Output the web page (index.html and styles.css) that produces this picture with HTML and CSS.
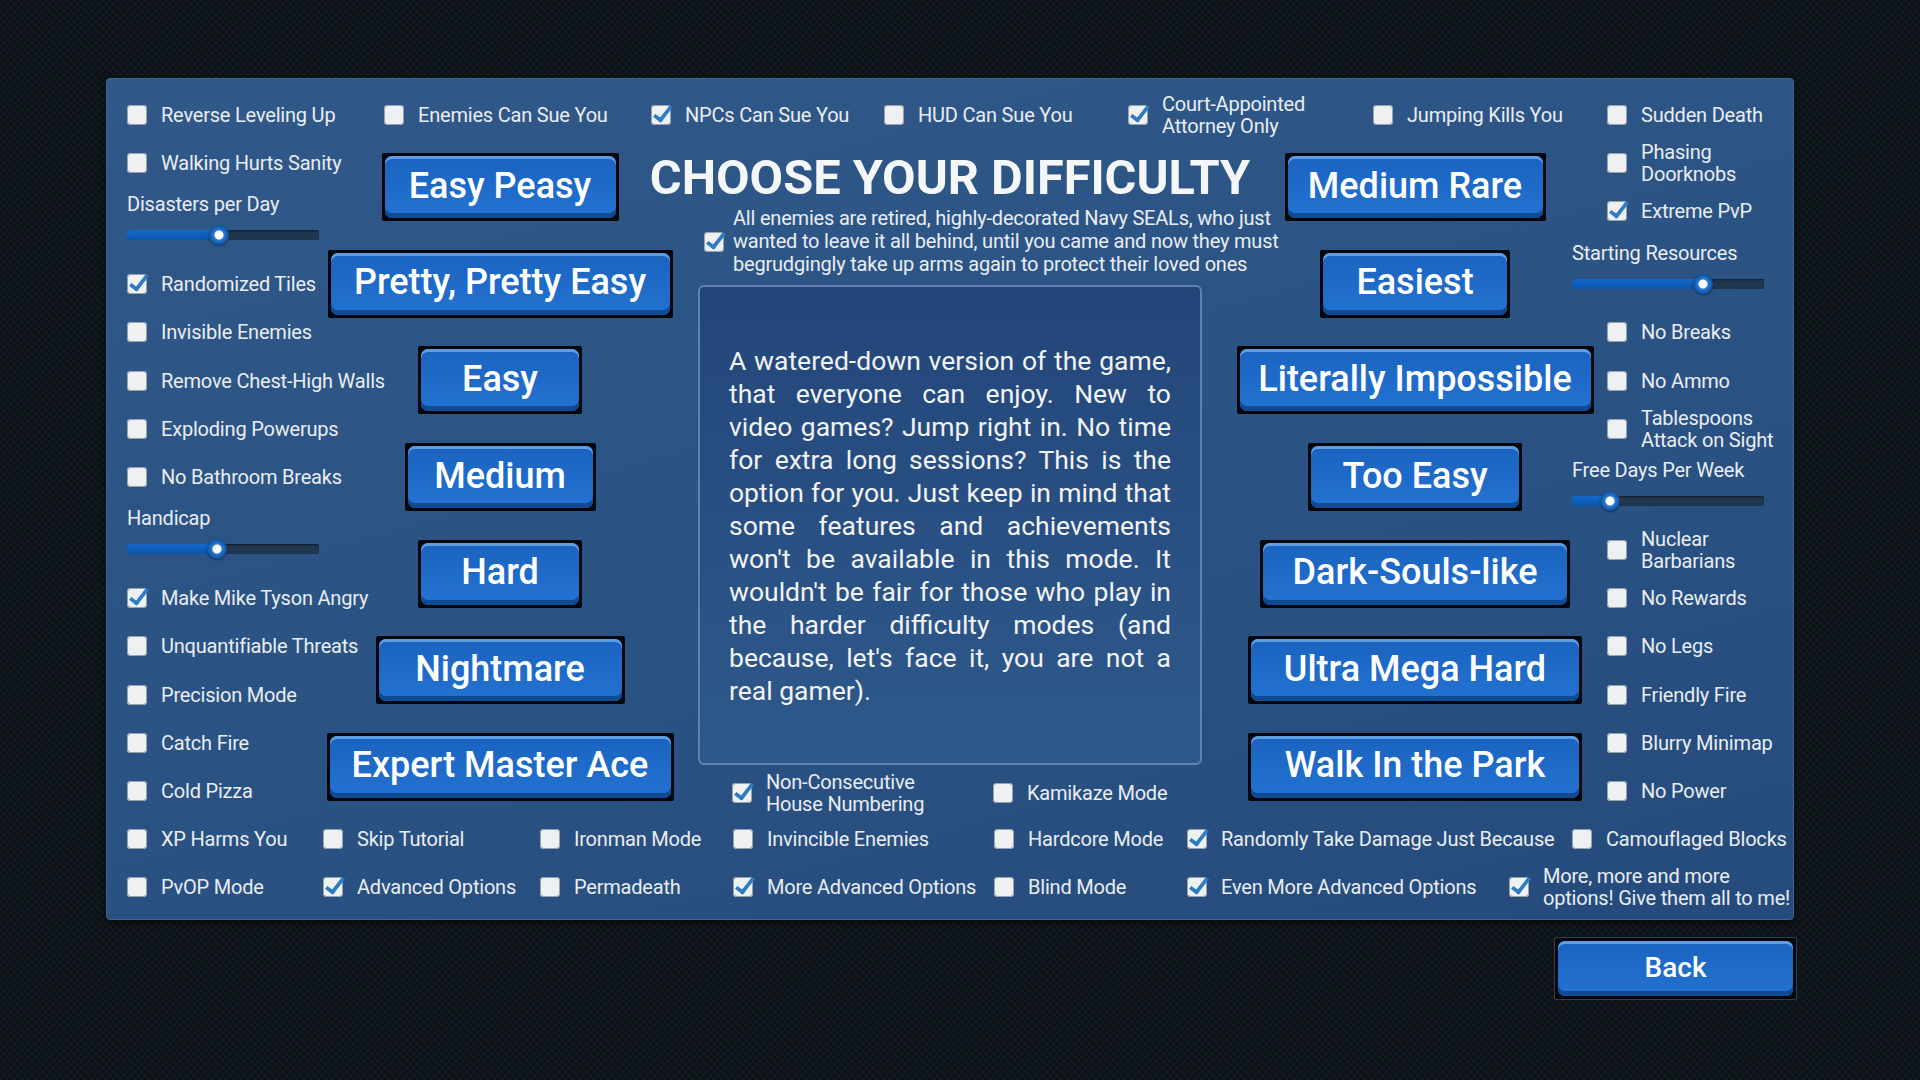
FILE: index.html
```html
<!DOCTYPE html>
<html lang="en">
<head>
    <meta charset="UTF-8">
    <meta name="viewport" content="width=device-width, initial-scale=1.0">
    <title>Choose Your Difficulty</title>
    <link rel="stylesheet" href="styles.css">
</head>
<body>
    <div class="screen">
        <div class="panel">
            <!-- first line of toggles -->
            <div class="grid-row top-row">
                <label class="opt"><span class="box"></span>Reverse Leveling Up</label>
                <label class="opt"><span class="box"></span>Enemies Can Sue You</label>
                <label class="opt"><span class="box on"></span>NPCs Can Sue You</label>
                <label class="opt"><span class="box"></span>HUD Can Sue You</label>
                <label class="opt"><span class="box on"></span>Court-Appointed<br>Attorney Only</label>
                <label class="opt"><span class="box"></span>Jumping Kills You</label>
                <label class="opt"><span class="box"></span>Sudden Death</label>
            </div>

            <div class="middle">
                <div class="side">
                    <label class="opt"><span class="box"></span>Walking Hurts Sanity</label>
                    <div class="slider-block">
                        <div class="slider-label">Disasters per Day</div>
                        <div class="slider"><div class="fill" style="width:48%"></div><span class="knob" style="left:48%"></span></div>
                    </div>
                    <label class="opt"><span class="box on"></span>Randomized Tiles</label>
                    <label class="opt"><span class="box"></span>Invisible Enemies</label>
                    <label class="opt"><span class="box"></span>Remove Chest-High Walls</label>
                    <label class="opt"><span class="box"></span>Exploding Powerups</label>
                    <label class="opt"><span class="box"></span>No Bathroom Breaks</label>
                    <div class="slider-block">
                        <div class="slider-label">Handicap</div>
                        <div class="slider"><div class="fill" style="width:47%"></div><span class="knob" style="left:47%"></span></div>
                    </div>
                    <label class="opt"><span class="box on"></span>Make Mike Tyson Angry</label>
                    <label class="opt"><span class="box"></span>Unquantifiable Threats</label>
                    <label class="opt"><span class="box"></span>Precision Mode</label>
                    <label class="opt"><span class="box"></span>Catch Fire</label>
                    <label class="opt"><span class="box"></span>Cold Pizza</label>
                </div>

                <div class="btn-col">
                    <div class="slot"><button class="diff peasy"><span>Easy Peasy</span></button></div>
                    <div class="slot"><button class="diff pretty"><span>Pretty, Pretty Easy</span></button></div>
                    <div class="slot"><button class="diff easy"><span>Easy</span></button></div>
                    <div class="slot"><button class="diff medium"><span>Medium</span></button></div>
                    <div class="slot"><button class="diff hard"><span>Hard</span></button></div>
                    <div class="slot"><button class="diff nightmare"><span>Nightmare</span></button></div>
                    <div class="slot"><button class="diff expert"><span>Expert Master Ace</span></button></div>
                </div>

                <div class="center">
                    <h1>CHOOSE YOUR DIFFICULTY</h1>
                    <label class="intro"><span class="box on"></span><span>All enemies are retired, highly-decorated Navy SEALs, who just<br>wanted to leave it all behind, until you came and now they must<br>begrudgingly take up arms again to protect their loved ones</span></label>
                    <div class="desc">
                        <p>A watered-down version of the game, that everyone can enjoy. New to video games? Jump right in. No time for extra long sessions? This is the option for you. Just keep in mind that some features and achievements won't be available in this mode. It wouldn't be fair for those who play in the harder difficulty modes (and because, let's face it, you are not a real gamer).</p>
                    </div>
                    <div class="center-opts">
                        <label class="opt"><span class="box on"></span>Non-Consecutive<br>House Numbering</label>
                        <label class="opt"><span class="box"></span>Kamikaze Mode</label>
                    </div>
                </div>

                <div class="btn-col right">
                    <div class="slot"><button class="diff rare"><span>Medium Rare</span></button></div>
                    <div class="slot"><button class="diff easiest"><span>Easiest</span></button></div>
                    <div class="slot"><button class="diff impossible"><span>Literally Impossible</span></button></div>
                    <div class="slot"><button class="diff too-easy"><span>Too Easy</span></button></div>
                    <div class="slot"><button class="diff souls"><span>Dark-Souls-like</span></button></div>
                    <div class="slot"><button class="diff ultra"><span>Ultra Mega Hard</span></button></div>
                    <div class="slot"><button class="diff park"><span>Walk In the Park</span></button></div>
                </div>

                <div class="side side-right">
                    <label class="opt"><span class="box"></span>Phasing<br>Doorknobs</label>
                    <label class="opt"><span class="box on"></span>Extreme PvP</label>
                    <div class="slider-block">
                        <div class="slider-label">Starting Resources</div>
                        <div class="slider"><div class="fill" style="width:68%"></div><span class="knob" style="left:68%"></span></div>
                    </div>
                    <label class="opt"><span class="box"></span>No Breaks</label>
                    <label class="opt"><span class="box"></span>No Ammo</label>
                    <label class="opt"><span class="box"></span>Tablespoons<br>Attack on Sight</label>
                    <div class="slider-block">
                        <div class="slider-label">Free Days Per Week</div>
                        <div class="slider"><div class="fill" style="width:20%"></div><span class="knob" style="left:20%"></span></div>
                    </div>
                    <label class="opt"><span class="box"></span>Nuclear<br>Barbarians</label>
                    <label class="opt"><span class="box"></span>No Rewards</label>
                    <label class="opt"><span class="box"></span>No Legs</label>
                    <label class="opt"><span class="box"></span>Friendly Fire</label>
                    <label class="opt"><span class="box"></span>Blurry Minimap</label>
                    <label class="opt"><span class="box"></span>No Power</label>
                </div>
            </div>

            <!-- last two lines of toggles -->
            <div class="grid-row">
                <label class="opt"><span class="box"></span>XP Harms You</label>
                <label class="opt"><span class="box"></span>Skip Tutorial</label>
                <label class="opt"><span class="box"></span>Ironman Mode</label>
                <label class="opt"><span class="box"></span>Invincible Enemies</label>
                <label class="opt"><span class="box"></span>Hardcore Mode</label>
                <label class="opt"><span class="box on"></span>Randomly Take Damage Just Because</label>
                <label class="opt"><span class="box"></span>Camouflaged Blocks</label>
            </div>
            <div class="grid-row">
                <label class="opt"><span class="box"></span>PvOP Mode</label>
                <label class="opt"><span class="box on"></span>Advanced Options</label>
                <label class="opt"><span class="box"></span>Permadeath</label>
                <label class="opt"><span class="box on"></span>More Advanced Options</label>
                <label class="opt"><span class="box"></span>Blind Mode</label>
                <label class="opt"><span class="box on"></span>Even More Advanced Options</label>
                <label class="opt pull-left"><span class="box on"></span>More, more and more<br>options! Give them all to me!</label>
            </div>
        </div>

        <div class="footer">
            <button class="back"><span>Back</span></button>
        </div>
    </div>
</body>
</html>
```

FILE: styles.css
```css
body {
    margin: 0;
    min-height: 1080px;
    font-family: Roboto, "Noto Sans", sans-serif;
    color: #e9edf1;
    background-color: #0e151b;
    background-image:
        repeating-linear-gradient(45deg, rgba(255,255,255,0.025) 0 2px, transparent 2px 5px),
        repeating-linear-gradient(-45deg, rgba(0,0,0,0.25) 0 2px, transparent 2px 5px);
}
.screen {
    width: 1690px;
    padding: 78px 0 0 106px;
}
.panel {
    box-sizing: border-box;
    width: 1688px;
    padding: 12px 0 8px 20px;
    background: linear-gradient(165deg, #30598a 0%, #2b5485 45%, #254b7c 100%);
    border: 1px solid #3b6595;
    border-radius: 4px;
    box-shadow: 0 2px 6px rgba(0,0,0,0.6);
}

/* checkbox + caption */
.opt {
    display: flex;
    align-items: center;
    gap: 14px;
    height: 48px;
    font-size: 20px;
    line-height: 22px;
    letter-spacing: -0.2px;
    white-space: nowrap;
}
.box {
    position: relative;
    flex: none;
    width: 20px;
    height: 20px;
    border-radius: 4px;
    background: #eef0f2;
    box-shadow: inset 0 0 0 1px #98a2ac;
}
.box.on::after {
    content: '';
    position: absolute;
    left: 7px;
    top: -3px;
    width: 6px;
    height: 16px;
    border: solid #2f7cc4;
    border-width: 0 4px 4px 0;
    border-radius: 0 0 2px 0;
    transform: rotate(38deg);
}

.grid-row {
    display: grid;
    grid-template-columns: 196px 217px 193px 261px 193px 385px 1fr;
}
.top-row {
    grid-template-columns: 257px 267px 233px 244px 245px 234px 1fr;
}
.pull-left {
    margin-left: -63px;
}

.middle {
    display: grid;
    grid-template-columns: 200px 346px 554px 345px 1fr;
    height: 676px;
}
.middle .opt {
    height: 48.3px;
}
.side-right .opt {
    padding-left: 35px;
}

/* sliders */
.slider-block {
    box-sizing: border-box;
    height: 72.5px;
    padding-top: 6px;
}
.slider-label {
    font-size: 20px;
    line-height: 22px;
    letter-spacing: -0.2px;
    white-space: nowrap;
}
.slider {
    position: relative;
    width: 192px;
    height: 10px;
    margin-top: 15px;
    background: #203750;
    border-radius: 2px;
    box-shadow: inset 0 1px 2px rgba(0,0,0,0.5);
}
.slider .fill {
    height: 100%;
    background: linear-gradient(#1569cb, #0a55ab);
    border-radius: 2px 0 0 2px;
}
.slider .knob {
    position: absolute;
    top: 50%;
    width: 20px;
    height: 20px;
    margin: -10px 0 0 -10px;
    border-radius: 50%;
    background: radial-gradient(circle, #ffffff 0 4px, #2a7ad6 5px, #0c4f9e 10px);
    box-shadow: 0 1px 2px rgba(0,0,0,0.5);
}

/* difficulty buttons */
.btn-col {
    display: flex;
    flex-direction: column;
    align-items: center;
}
.btn-col.right {
    padding-left: 31px;
}
.slot {
    height: 96.6px;
    display: flex;
    align-items: center;
    justify-content: center;
}
.diff, .back {
    height: 68px;
    padding: 3px;
    border: none;
    border-radius: 2px;
    background: #03070b;
    font-family: Roboto, "Noto Sans", sans-serif;
    font-size: 36px;
    font-weight: 500;
    color: #ffffff;
    cursor: pointer;
}
.diff span, .back span {
    display: flex;
    align-items: center;
    justify-content: center;
    height: 100%;
    padding-bottom: 3px;
    box-sizing: border-box;
    border-radius: 7px;
    background: linear-gradient(#1b63bf, #2372d2);
    box-shadow: inset 0 3px 0 #5d9ee7, inset 0 -5px 0 #0f4a93;
    white-space: nowrap;
}
.peasy { width: 237px; }
.pretty { width: 345px; }
.easy, .hard { width: 164px; }
.medium { width: 191px; }
.nightmare { width: 249px; }
.expert { width: 347px; }
.rare { width: 261px; }
.easiest { width: 190px; }
.impossible { width: 357px; }
.too-easy { width: 214px; }
.souls { width: 310px; }
.ultra, .park { width: 334px; }

/* middle column */
.center {
    display: flex;
    flex-direction: column;
    align-items: center;
}
.center h1 {
    margin: 17px 0 0;
    font-size: 48.7px;
    line-height: 44px;
    font-weight: 700;
    color: #f4f6f8;
    white-space: nowrap;
}
.intro {
    align-self: flex-start;
    display: flex;
    align-items: center;
    gap: 9px;
    width: 572px;
    margin: 7px 0 0 31px;
    font-size: 20px;
    line-height: 23px;
    letter-spacing: -0.2px;
    white-space: nowrap;
}
.desc {
    box-sizing: border-box;
    display: flex;
    align-items: center;
    width: 504px;
    height: 480px;
    margin-top: 9px;
    padding: 0 29px;
    border: 2px solid #6381ad;
    border-radius: 6px;
    background: linear-gradient(#23467a, #2f598b);
}
.desc p {
    margin: 0;
    font-size: 26.5px;
    line-height: 33px;
    text-align: justify;
    color: #f1f3f5;
}
.center-opts {
    align-self: stretch;
    display: grid;
    grid-template-columns: 261px auto;
    margin-top: 4px;
    padding-left: 59px;
}

.footer {
    display: flex;
    justify-content: flex-end;
    margin-top: 18px;
}
.back {
    width: 241px;
    height: 61px;
    font-size: 28px;
    box-shadow: 0 0 0 1px #2c3f55;
}
```
